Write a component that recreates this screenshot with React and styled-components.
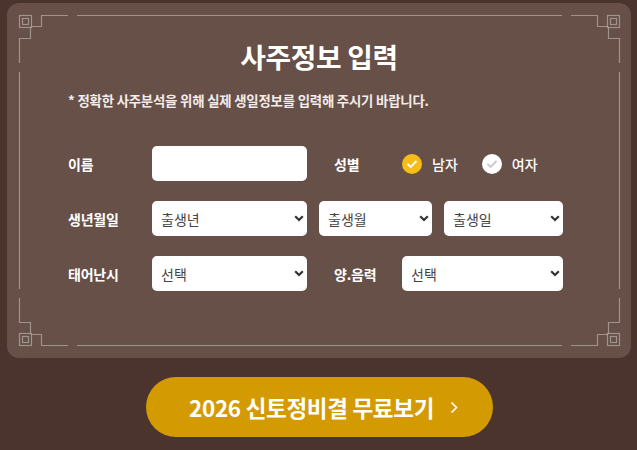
import React from "react";
import styled, { createGlobalStyle } from "styled-components";

const GlobalStyle = createGlobalStyle`
  html, body {
    margin: 0;
    padding: 0;
    background: #4b342d;
    font-family: "Noto Sans CJK KR", "Noto Sans", sans-serif;
  }
`;

const Page = styled.div`
  width: 637px;
  height: 450px;
  padding-top: 3px;
  box-sizing: border-box;
  display: flex;
  flex-direction: column;
  align-items: center;
  overflow: hidden;
`;

const Card = styled.div`
  position: relative;
  width: 624px;
  height: 355px;
  box-sizing: border-box;
  margin-left: 1px;
  background: #665048;
  border-radius: 12px;
  padding: 34px 0 0 61px;
`;

const FrameSvg = styled.svg`
  position: absolute;
  left: 0;
  top: 0;
  pointer-events: none;
`;

const Title = styled.h1`
  margin: 0 0 0 -61px;
  text-align: center;
  font-size: 27.8px;
  line-height: 38px;
  font-weight: 700;
  color: #ffffff;
  letter-spacing: -0.3px;
`;

const Notice = styled.p`
  margin: 16px 0 0 0;
  font-size: 13.4px;
  line-height: 19px;
  font-weight: 700;
  color: #f3ecea;
  letter-spacing: -0.2px;
`;

const Form = styled.div`
  margin-top: 36px;
  display: flex;
  flex-direction: column;
  gap: 20px;
`;

const Row = styled.div`
  display: flex;
  align-items: center;
  height: 35px;
`;

const Label = styled.span`
  width: ${({ $w }) => $w || 84}px;
  margin-left: ${({ $ml }) => $ml || 0}px;
  flex: none;
  font-size: 14px;
  font-weight: 700;
  color: #ffffff;
  letter-spacing: -0.2px;
`;

const TextInput = styled.input`
  width: 155px;
  height: 35px;
  box-sizing: border-box;
  border: none;
  border-radius: 5px;
  background: #fff;
  outline: none;
  padding: 0 10px;
  font-family: inherit;
`;

const SelectWrap = styled.div`
  position: relative;
  width: ${({ $w }) => $w}px;
  margin-left: ${({ $ml }) => $ml || 0}px;
  flex: none;
`;

const Select = styled.select`
  appearance: none;
  width: 100%;
  height: 35px;
  box-sizing: border-box;
  border: none;
  border-radius: 5px;
  background: #fff;
  padding: 0 24px 0 9px;
  font-family: inherit;
  font-size: 14px;
  color: #444;
  outline: none;
`;

const Chevron = styled.svg`
  position: absolute;
  right: 3px;
  top: 14px;
  pointer-events: none;
`;

const Gender = styled.div`
  display: flex;
  align-items: center;
  gap: 10px;
  margin-right: 24px;
  font-size: 14px;
  font-weight: 500;
  color: #ffffff;
`;

const Check = styled.span`
  width: 20px;
  height: 20px;
  border-radius: 50%;
  background: ${({ $on }) => ($on ? "#f6bd16" : "#ffffff")};
  display: flex;
  align-items: center;
  justify-content: center;
`;

const CtaButton = styled.button`
  margin-top: 19px;
  margin-left: 2px;
  width: 347px;
  height: 60px;
  border: none;
  border-radius: 30px;
  background: #d39a02;
  color: #ffffff;
  font-family: inherit;
  font-size: 22.5px;
  font-weight: 700;
  letter-spacing: -0.3px;
  display: flex;
  align-items: center;
  justify-content: center;
  gap: 16px;
  padding: 0 0 0 8px;
  cursor: pointer;
`;

const line = "rgba(255,255,255,0.38)";

function Corner({ transform }) {
  return (
    <g transform={transform} fill="none" stroke={line} strokeWidth="1.2">
      <rect x="19.5" y="15.5" width="12" height="12" />
      <rect x="22.5" y="18.5" width="6" height="6" />
      <path d="M31.5 26.5 H41.5 V15.5 H68" />
      <path d="M30.5 27.5 V38.5 H19.5 V63" />
    </g>
  );
}

function Frame() {
  const w = 624;
  const h = 355;
  return (
    <FrameSvg width={w} height={h} viewBox={`0 0 ${w} ${h}`}>
      <g transform="translate(-7,-3)">
        <Corner />
        <Corner transform="translate(639,0) scale(-1,1)" />
        <Corner transform="translate(0,361) scale(1,-1)" />
        <Corner transform="translate(639,361) scale(-1,-1)" />
        <g stroke={line} strokeWidth="1.2">
          <line x1="77" y1="15.5" x2="562" y2="15.5" />
          <line x1="77" y1="345.5" x2="562" y2="345.5" />
          <line x1="19.5" y1="72" x2="19.5" y2="289" />
          <line x1="619.5" y1="72" x2="619.5" y2="289" />
        </g>
      </g>
    </FrameSvg>
  );
}

function Dropdown({ w, ml, placeholder }) {
  return (
    <SelectWrap $w={w} $ml={ml}>
      <Select defaultValue="">
        <option value="">{placeholder}</option>
      </Select>
      <Chevron width="10" height="7" viewBox="0 0 10 7">
        <path d="M1.2 1.2 L5 5 L8.8 1.2" fill="none" stroke="#333" strokeWidth="2.2" />
      </Chevron>
    </SelectWrap>
  );
}

function CheckMark({ color }) {
  return (
    <svg width="12" height="10" viewBox="0 0 12 10">
      <path d="M1.5 5 L4.6 8 L10.5 2" fill="none" stroke={color} strokeWidth="1.8" />
    </svg>
  );
}

export default function App() {
  return (
    <>
      <GlobalStyle />
      <Page>
        <Card>
          <Frame />
          <Title>사주정보 입력</Title>
          <Notice>* 정확한 사주분석을 위해 실제 생일정보를 입력해 주시기 바랍니다.</Notice>
          <Form>
            <Row>
              <Label>이름</Label>
              <TextInput type="text" />
              <Label $w={68} $ml={27}>성별</Label>
              <Gender>
                <Check $on>
                  <CheckMark color="#ffffff" />
                </Check>
                남자
              </Gender>
              <Gender>
                <Check>
                  <CheckMark color="#c9c9c9" />
                </Check>
                여자
              </Gender>
            </Row>
            <Row>
              <Label>생년월일</Label>
              <Dropdown w={155} placeholder="출생년" />
              <Dropdown w={113} ml={12} placeholder="출생월" />
              <Dropdown w={119} ml={12} placeholder="출생일" />
            </Row>
            <Row>
              <Label>태어난시</Label>
              <Dropdown w={155} placeholder="선택" />
              <Label $w={68} $ml={27}>양.음력</Label>
              <Dropdown w={161} placeholder="선택" />
            </Row>
          </Form>
        </Card>
        <CtaButton>
          2026 신토정비결 무료보기
          <svg width="8" height="13" viewBox="0 0 8 13">
            <path d="M1.5 1.5 L6.5 6.5 L1.5 11.5" fill="none" stroke="#fff" strokeWidth="1.6" />
          </svg>
        </CtaButton>
      </Page>
    </>
  );
}
